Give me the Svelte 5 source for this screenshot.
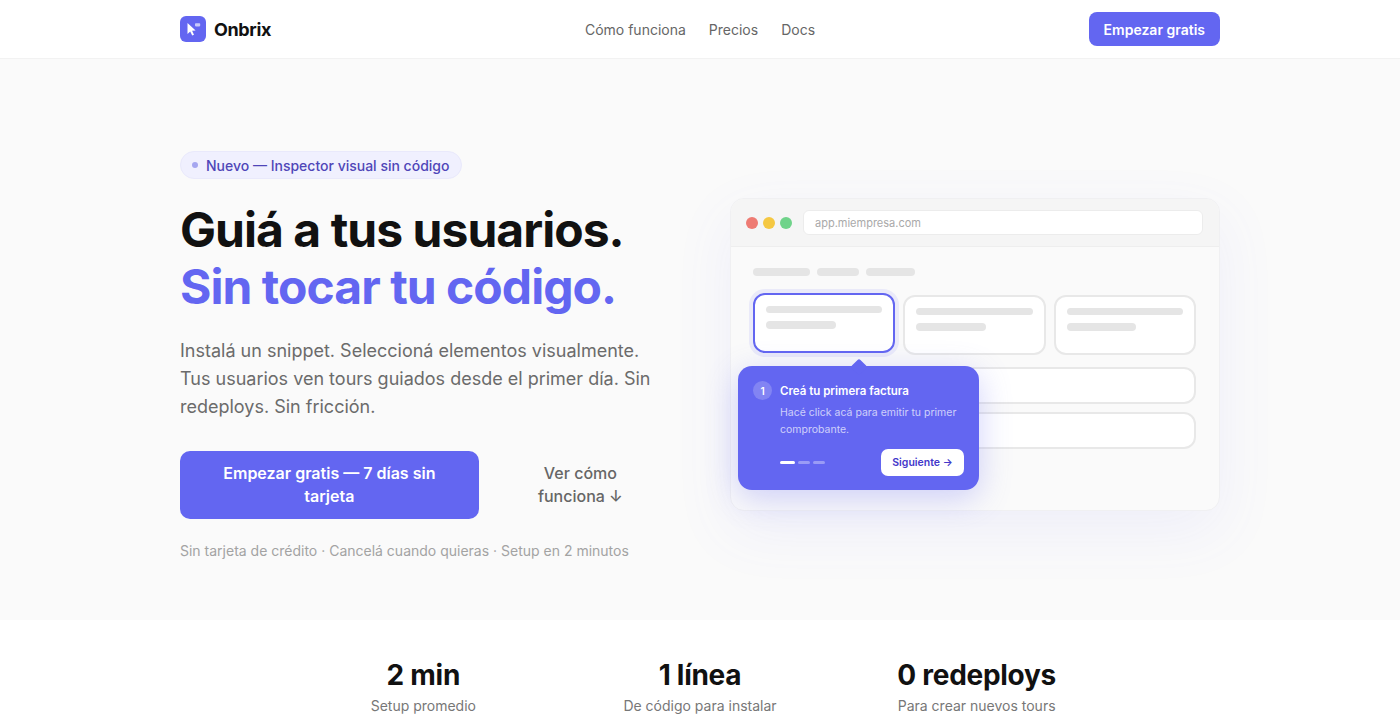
<script>
  const stats = [
    { value: '2 min', label: 'Setup promedio' },
    { value: '1 línea', label: 'De código para instalar' },
    { value: '0 redeploys', label: 'Para crear nuevos tours' }
  ];
  const links = ['Cómo funciona', 'Precios', 'Docs'];
</script>

<div class="page">
  <header class="nav">
    <div class="wrap nav-inner">
      <a class="brand" href="#top">
        <span class="logo">
          <svg viewBox="0 0 26 26" width="26" height="26" aria-hidden="true">
            <path d="M7.5 7 L7.5 18 L10.2 15.5 L12.2 19.6 L14 18.7 L12.1 14.8 L15.6 14.6 Z" fill="#fff" />
            <rect x="15" y="7.2" width="5.2" height="3.2" rx="0.8" fill="#fff" fill-opacity="0.65" />
          </svg>
        </span>
        <span class="brand-name">Onbrix</span>
      </a>
      <nav class="links">
        {#each links as link}
          <a href="#top">{link}</a>
        {/each}
      </nav>
      <button class="cta">Empezar gratis</button>
    </div>
  </header>

  <section class="hero">
    <div class="wrap hero-grid">
      <div class="copy">
        <div class="badge"><span class="badge-dot"></span>Nuevo — Inspector visual sin código</div>
        <h1>Guiá a tus usuarios.<br /><span class="accent">Sin tocar tu código.</span></h1>
        <p class="lead">Instalá un snippet. Seleccioná elementos visualmente. Tus usuarios ven tours guiados desde el primer día. Sin redeploys. Sin fricción.</p>
        <div class="actions">
          <button class="primary">Empezar gratis — 7 días sin tarjeta</button>
          <button class="secondary">Ver cómo funciona ↓</button>
        </div>
        <p class="fine">Sin tarjeta de crédito · Cancelá cuando quieras · Setup en 2 minutos</p>
      </div>

      <div class="mock">
        <div class="window">
          <div class="chrome">
            <span class="dot red"></span>
            <span class="dot yellow"></span>
            <span class="dot green"></span>
            <div class="url">app.miempresa.com</div>
          </div>
          <div class="screen">
            <div class="tabs">
              <span class="bar t1"></span>
              <span class="bar t2"></span>
              <span class="bar t3"></span>
            </div>
            <div class="cards">
              <div class="card active"><span class="bar l1"></span><span class="bar l2"></span></div>
              <div class="card"><span class="bar l1"></span><span class="bar l2"></span></div>
              <div class="card"><span class="bar l1"></span><span class="bar l2"></span></div>
            </div>
            <div class="row"></div>
            <div class="row"></div>
          </div>
        </div>

        <div class="tip">
          <span class="tip-arrow"></span>
          <div class="tip-head">
            <span class="num">1</span>
            <span class="tip-title">Creá tu primera factura</span>
          </div>
          <p class="tip-desc">Hacé click acá para emitir tu primer comprobante.</p>
          <div class="tip-foot">
            <div class="steps"><span class="step on"></span><span class="step"></span><span class="step"></span></div>
            <button class="next">Siguiente →</button>
          </div>
        </div>
      </div>
    </div>
  </section>

  <section class="stats">
    {#each stats as s}
      <div class="stat">
        <div class="value">{s.value}</div>
        <div class="label">{s.label}</div>
      </div>
    {/each}
  </section>
</div>

<style>
  :global(body) {
    margin: 0;
    background: #fff;
  }
  .page {
    font-family: Inter, "Liberation Sans", sans-serif;
    color: #111;
    -webkit-font-smoothing: antialiased;
  }
  .wrap {
    width: 1040px;
    margin: 0 auto;
  }
  button {
    font-family: inherit;
    border: none;
    cursor: pointer;
  }
  a {
    color: inherit;
    text-decoration: none;
  }

  .nav {
    background: #fff;
    border-bottom: 1px solid #f2f2f2;
  }
  .nav-inner {
    height: 58px;
    display: grid;
    grid-template-columns: 1fr auto 1fr;
    align-items: center;
  }
  .brand {
    display: flex;
    align-items: center;
    gap: 8px;
  }
  .logo {
    width: 26px;
    height: 26px;
    border-radius: 6px;
    background: #6366f1;
    display: block;
  }
  .logo svg {
    display: block;
  }
  .brand-name {
    font-size: 18px;
    font-weight: 700;
    letter-spacing: -0.02em;
  }
  .links {
    display: flex;
    gap: 23px;
    font-size: 14px;
    color: #666;
  }
  .cta {
    justify-self: end;
    height: 34px;
    padding: 0 15px;
    border-radius: 8px;
    background: #6366f1;
    color: #fff;
    font-size: 14px;
    font-weight: 600;
  }

  .hero {
    background: #fafafa;
    height: 561px;
    box-sizing: border-box;
    padding-top: 92px;
  }
  .hero-grid {
    display: grid;
    grid-template-columns: 490px 490px;
    column-gap: 60px;
  }
  .badge {
    display: inline-flex;
    align-items: center;
    gap: 8px;
    height: 28px;
    box-sizing: border-box;
    padding: 0 12px 0 11px;
    border-radius: 14px;
    background: #f0f0fe;
    border: 1px solid #e9e9fb;
    color: #4f46b8;
    font-size: 14px;
    font-weight: 500;
  }
  .badge-dot {
    width: 6px;
    height: 6px;
    border-radius: 50%;
    background: #a5a6f0;
  }
  h1 {
    margin: 22px 0 0;
    font-size: 48px;
    line-height: 57px;
    font-weight: 700;
    letter-spacing: -0.02em;
    color: #111;
  }
  .accent {
    color: #6366f1;
  }
  .lead {
    margin: 22px 0 0;
    font-size: 18px;
    line-height: 27.9px;
    color: #6b6b6b;
  }
  .actions {
    display: flex;
    gap: 12px;
    margin-top: 30px;
  }
  .primary {
    flex: 1 1 auto;
    padding: 11px 28px;
    border-radius: 10px;
    background: #6366f1;
    color: #fff;
    font-size: 16px;
    font-weight: 600;
    line-height: 23px;
  }
  .secondary {
    flex: 0 1 auto;
    width: 192px;
    padding: 11px 24px;
    background: transparent;
    color: #666;
    font-size: 16px;
    font-weight: 500;
    line-height: 23px;
  }
  .fine {
    margin: 23px 0 0;
    font-size: 14px;
    color: #a3a3a3;
  }

  .mock {
    position: relative;
    margin-top: 47px;
    height: 313px;
  }
  .window {
    height: 313px;
    box-sizing: border-box;
    border: 1px solid #f0f0f2;
    border-radius: 14px;
    background: #fafafa;
    box-shadow: 0 20px 60px rgba(99, 102, 241, 0.08);
    overflow: hidden;
  }
  .chrome {
    display: flex;
    align-items: center;
    gap: 5px;
    height: 48px;
    box-sizing: border-box;
    padding: 0 16px 0 15px;
    background: #f5f5f5;
    border-bottom: 1px solid #eeeeee;
  }
  .dot {
    width: 12px;
    height: 12px;
    border-radius: 50%;
  }
  .red { background: #ee7b73; }
  .yellow { background: #f5c842; }
  .green { background: #6fd38a; }
  .url {
    flex: 1;
    height: 25px;
    box-sizing: border-box;
    margin-left: 6px;
    padding: 0 11px;
    display: flex;
    align-items: center;
    background: #fff;
    border: 1px solid #ececec;
    border-radius: 6px;
    font-size: 11px;
    color: #a9a9a9;
  }
  .screen {
    padding: 21px 23px 0 22px;
  }
  .tabs {
    display: flex;
    gap: 7px;
  }
  .bar {
    display: block;
    height: 7.5px;
    border-radius: 4px;
    background: #e5e5e5;
  }
  .t1 { width: 57px; }
  .t2 { width: 42px; }
  .t3 { width: 49px; }
  .cards {
    display: grid;
    grid-template-columns: repeat(3, 1fr);
    gap: 8px;
    margin-top: 19px;
  }
  .card {
    height: 60px;
    box-sizing: border-box;
    padding: 11px 11px 0;
    background: #fff;
    border: 2px solid #e8e8e8;
    border-radius: 12px;
  }
  .card.active {
    border-color: #6366f1;
    box-shadow: 0 0 0 4px rgba(99, 102, 241, 0.1);
    transform: translateY(-2px);
  }
  .l1 { width: 100%; }
  .l2 { width: 60%; margin-top: 8px; }
  .row {
    height: 37px;
    box-sizing: border-box;
    margin-top: 8px;
    background: #fff;
    border: 2px solid #e8e8e8;
    border-radius: 12px;
  }
  .cards + .row {
    margin-top: 12px;
  }

  .tip {
    position: absolute;
    left: 8px;
    top: 168px;
    width: 241px;
    height: 124px;
    box-sizing: border-box;
    padding: 15px 15px 0;
    border-radius: 14px;
    background: #6366f1;
    color: #fff;
    box-shadow: 0 8px 32px rgba(99, 102, 241, 0.3);
  }
  .tip-arrow {
    position: absolute;
    left: 115px;
    top: -5px;
    width: 12px;
    height: 12px;
    background: #6366f1;
    transform: rotate(45deg);
    border-radius: 2px;
  }
  .tip-head {
    position: relative;
    display: flex;
    align-items: center;
    gap: 8px;
    height: 19px;
  }
  .num {
    width: 19px;
    height: 19px;
    border-radius: 50%;
    background: rgba(255, 255, 255, 0.2);
    display: flex;
    align-items: center;
    justify-content: center;
    font-size: 10px;
    font-weight: 600;
  }
  .tip-title {
    font-size: 11.5px;
    font-weight: 600;
  }
  .tip-desc {
    margin: 4px 0 0 27px;
    font-size: 10.5px;
    line-height: 17px;
    color: rgba(255, 255, 255, 0.7);
  }
  .tip-foot {
    display: flex;
    align-items: center;
    justify-content: space-between;
    margin: 11px 0 0 27px;
  }
  .steps {
    display: flex;
    gap: 3px;
  }
  .step {
    width: 12px;
    height: 3px;
    border-radius: 2px;
    background: rgba(255, 255, 255, 0.35);
  }
  .step.on {
    width: 15px;
    background: #fff;
  }
  .next {
    width: 83px;
    height: 27px;
    padding: 0;
    border-radius: 7px;
    background: #fff;
    color: #4338ca;
    font-size: 10.5px;
    font-weight: 600;
  }

  .stats {
    width: 830px;
    margin: 0 auto;
    display: grid;
    grid-template-columns: repeat(3, 1fr);
    padding: 37px 0 5px;
    text-align: center;
  }
  .value {
    font-size: 28px;
    line-height: 36px;
    font-weight: 700;
    letter-spacing: -0.01em;
    color: #111;
  }
  .label {
    margin-top: 3px;
    font-size: 14px;
    line-height: 20px;
    color: #777;
  }
</style>
